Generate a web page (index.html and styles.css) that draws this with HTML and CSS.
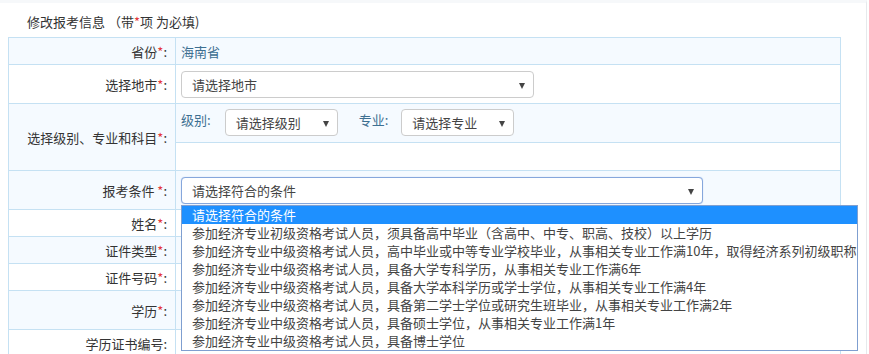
FILE: index.html
```html
<!DOCTYPE html>
<html lang="zh">
<head>
<meta charset="utf-8">
<title>修改报考信息</title>
<link rel="stylesheet" href="styles.css">
</head>
<body>
<div class="page">
  <div class="title">修改报考信息 （带<span class="req">*</span>项 为必填)</div>
  <table class="form">
    <tr class="alt h27">
      <td class="lbl">省份<span class="req">*</span>:</td>
      <td class="val"><span class="static">海南省</span></td>
    </tr>
    <tr class="h39">
      <td class="lbl">选择地市<span class="req">*</span>:</td>
      <td class="val">
        <div class="sel w353"><span>请选择地市</span><i class="arrow"></i></div>
      </td>
    </tr>
    <tr class="alt">
      <td class="lbl">选择级别、专业和科目<span class="req">*</span>:</td>
      <td class="val nopad">
        <div class="sub sub1">
          <span class="sublbl">级别:</span>
          <div class="sel w113"><span>请选择级别</span><i class="arrow"></i></div>
          <span class="sublbl gap">专业:</span>
          <div class="sel w113"><span>请选择专业</span><i class="arrow"></i></div>
        </div>
        <div class="sub sub2"></div>
      </td>
    </tr>
    <tr class="alt h39">
      <td class="lbl">报考条件 <span class="req">*</span>:</td>
      <td class="val">
        <div class="dropwrap">
          <div class="sel w522 focus"><span>请选择符合的条件</span><i class="arrow"></i></div>
          <ul class="droplist">
            <li class="on">请选择符合的条件</li>
            <li>参加经济专业初级资格考试人员，须具备高中毕业（含高中、中专、职高、技校）以上学历</li>
            <li>参加经济专业中级资格考试人员，高中毕业或中等专业学校毕业，从事相关专业工作满10年，取得经济系列初级职称</li>
            <li>参加经济专业中级资格考试人员，具备大学专科学历，从事相关专业工作满6年</li>
            <li>参加经济专业中级资格考试人员，具备大学本科学历或学士学位，从事相关专业工作满4年</li>
            <li>参加经济专业中级资格考试人员，具备第二学士学位或研究生班毕业，从事相关专业工作满2年</li>
            <li>参加经济专业中级资格考试人员，具备硕士学位，从事相关专业工作满1年</li>
            <li>参加经济专业中级资格考试人员，具备博士学位</li>
          </ul>
        </div>
      </td>
    </tr>
    <tr class="h27">
      <td class="lbl">姓名<span class="req">*</span>:</td>
      <td class="val"></td>
    </tr>
    <tr class="alt h27">
      <td class="lbl">证件类型<span class="req">*</span>:</td>
      <td class="val"></td>
    </tr>
    <tr class="h27">
      <td class="lbl">证件号码<span class="req">*</span>:</td>
      <td class="val"></td>
    </tr>
    <tr class="alt h39">
      <td class="lbl">学历<span class="req">*</span>:</td>
      <td class="val"></td>
    </tr>
    <tr class="h27">
      <td class="lbl">学历证书编号:</td>
      <td class="val"></td>
    </tr>
  </table>
</div>
</body>
</html>
```

FILE: styles.css
```css
* { box-sizing: border-box; }
html, body {
  margin: 0;
  padding: 0;
  background: #fff;
  overflow: hidden;
}
body {
  font-family: "Noto Sans CJK SC", "Microsoft YaHei", sans-serif;
  font-size: 13px;
  color: #333;
}
.page {
  width: 867px;
  height: 354px;
  padding-left: 8px;
  border-right: 1px solid #e6e9ec;
  border-top: 3px solid #f6f8fa;
}
.title {
  height: 34px;
  line-height: 20px;
  padding: 9px 0 0 19px;
  color: #333;
}
.req { color: #e4393c; }
.form {
  width: 833px;
  border-collapse: collapse;
  table-layout: fixed;
}
.form td {
  border: 1px solid #c5e1f3;
  padding: 0;
  vertical-align: middle;
}
.form tr.alt td { background: #f5faff; }
.form tr.h27 td { height: 27px; }
.form tr.h39 td { height: 39px; }
.lbl {
  width: 167px;
  text-align: right;
  padding-right: 8px !important;
  color: #333;
}
.val {
  padding: 0 5px !important;
}
.val.nopad { padding: 0 !important; }
.static { color: #3d6f91; }
.sel {
  position: relative;
  height: 27px;
  border: 1px solid #ccc;
  border-radius: 4px;
  background: #fff;
  padding-left: 10px;
  line-height: 25px;
  color: #444;
}
.sel.focus { border-color: #86a7dc; box-shadow: 0 0 1px #a9c3ec; }
.w353 { width: 353px; }
.w113 { width: 113px; }
.w522 { width: 522px; }
.arrow {
  position: absolute;
  right: 8px;
  top: 11px;
  width: 0;
  height: 0;
  border-left: 3.5px solid transparent;
  border-right: 3.5px solid transparent;
  border-top: 6px solid #444;
}
.sub {
  display: flex;
  align-items: center;
  padding: 0 5px;
}
.sub1 {
  height: 39px;
  border-bottom: 1px solid #c5e1f3;
  align-items: flex-start;
  padding-top: 5px;
}
.sub1 .sublbl { line-height: 22px; }
.sub2 { height: 27px; background: #fff; }
.sublbl {
  color: #3d6f91;
  margin-right: 14px;
}
.sublbl.gap { margin-left: 21px; margin-right: 13px; }
.dropwrap { position: relative; }
.droplist {
  position: absolute;
  left: 0;
  top: 28px;
  width: 677px;
  margin: 0;
  padding: 0;
  list-style: none;
  background: #fff;
  border: 1px solid #7f9fd0;
  z-index: 5;
}
.droplist li {
  height: 18px;
  line-height: 18px;
  padding-left: 10px;
  white-space: nowrap;
  color: #444;
}
.droplist li.on {
  background: #1e90ff;
  color: #fff;
}
```
